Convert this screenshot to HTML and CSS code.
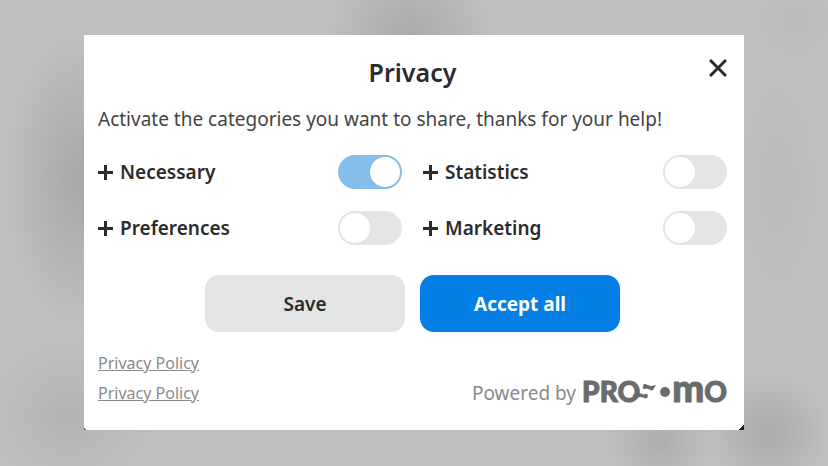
FILE: index.html
```html
<!DOCTYPE html>
<html lang="en">
<head>
  <meta charset="UTF-8">
  <meta name="viewport" content="width=device-width, initial-scale=1">
  <title>Privacy</title>
  <link rel="stylesheet" href="styles.css">
</head>
<body>
  <div class="dialog" role="dialog" aria-labelledby="title">
    <div class="header">
      <h1 id="title" class="title">Privacy</h1>
      <button class="close" aria-label="Close">
        <svg width="18" height="18" viewBox="0 0 18 18"><path d="M1 1l16 16M17 1L1 17"/></svg>
      </button>
    </div>

    <p class="intro">Activate the categories you want to share, thanks for your help!</p>

    <form class="categories">
      <div class="category">
        <button type="button" class="expand" aria-label="More about Necessary">
          <svg width="15" height="15" viewBox="0 0 15 15"><path d="M7.500 0v15M0 7.500h15"/></svg>
        </button>
        <label for="necessary">Necessary</label>
        <input type="checkbox" id="necessary" class="toggle" checked>
      </div>
      <div class="category">
        <button type="button" class="expand" aria-label="More about Statistics">
          <svg width="15" height="15" viewBox="0 0 15 15"><path d="M7.500 0v15M0 7.500h15"/></svg>
        </button>
        <label for="statistics">Statistics</label>
        <input type="checkbox" id="statistics" class="toggle">
      </div>
      <div class="category">
        <button type="button" class="expand" aria-label="More about Preferences">
          <svg width="15" height="15" viewBox="0 0 15 15"><path d="M7.500 0v15M0 7.500h15"/></svg>
        </button>
        <label for="preferences">Preferences</label>
        <input type="checkbox" id="preferences" class="toggle">
      </div>
      <div class="category">
        <button type="button" class="expand" aria-label="More about Marketing">
          <svg width="15" height="15" viewBox="0 0 15 15"><path d="M7.500 0v15M0 7.500h15"/></svg>
        </button>
        <label for="marketing">Marketing</label>
        <input type="checkbox" id="marketing" class="toggle">
      </div>
    </form>

    <div class="actions">
      <button class="btn">Save</button>
      <button class="btn accept">Accept all</button>
    </div>

    <div class="footer">
      <div class="links">
        <a href="#">Privacy Policy</a>
        <a href="#">Privacy Policy</a>
      </div>
      <div class="powered">
        <span>Powered by</span>
        <span class="logo">
          <span>PRO</span>
          <svg class="mark" width="32" height="20" viewBox="0 0 32 20">
            <path d="M-7 12.500L-1 11l5 1.500q2-1.500 4 .5-1 .8 0 2-2 2.500-4.500.5L-1 15l-5 2zM3 3q2-2 4.500 0l3.500 1 5-1-3 5q-2 1-3.500-.5L6 6.500Q4 8 2.500 6 4 4.500 3 3z"/>
            <circle cx="25" cy="10" r="5"/>
          </svg>
          <span class="big">m</span>
          <span>O</span>
        </span>
      </div>
    </div>
  </div>
</body>
</html>
```
FILE: styles.css
```css
* {
  box-sizing: border-box;
}
body {
  margin: 0;
  min-height: 100vh;
  padding: 35px 84px;
  font-family: 'Noto Sans', 'Open Sans', sans-serif;
  font-size: 19px;
  color: #2b2b2b;
  background:
    radial-gradient(circle at 410px 38px, #a8aaaa 0, #a8aaaa00 85px),
    radial-gradient(ellipse 75px 150px at 78px 180px, #a6a8a8 0, #a6a8a800 100%),
    radial-gradient(ellipse 90px 80px at 70px 415px, #b2b4b4 0, #b2b4b400 100%),
    radial-gradient(ellipse 45px 120px at 778px 185px, #b8b9b9 0, #b8b9b900 100%),
    radial-gradient(circle at 796px 20px, #b9baba 0, #b9baba00 45px),
    radial-gradient(circle at 768px 433px, #a9aaaa 0, #a9aaaa00 62px),
    radial-gradient(circle at 660px 440px, #acaeae 0, #acaeae00 55px),
    #bfbfbf;
}
button {
  font: inherit;
  color: inherit;
  border: none;
  cursor: pointer;
}
svg {
  display: block;
}
.dialog {
  /* tiny blue and dark corners at the bottom */
  background:
    linear-gradient(45deg, #2277b5 2px, #fff0 2px),
    linear-gradient(135deg, #fff calc(100% - 4px), #222 calc(100% - 4px));
  padding: 20px 17px 22px 14px;
}
.header {
  display: grid;
  grid-template-columns: 1fr auto 1fr;
}
.title {
  grid-column: 2;
  margin: 0;
  font-size: 25px;
  line-height: 34px;
  font-weight: 600;
}
.close {
  justify-self: end;
  align-self: start;
  padding: 4px 0;
  background: none;
}
.close path,
.expand path {
  fill: none;
  stroke: #2b2b2b;
  stroke-width: 3;
}
.intro {
  margin: 16px 0 22px;
  line-height: 28px;
  color: #444;
}
.categories {
  display: grid;
  grid-template-columns: 1fr 1fr;
  gap: 22px 21px;
}
.category {
  display: flex;
  align-items: center;
  gap: 7px;
  font-weight: 600;
}
.category label {
  flex: 1;
  line-height: 34px;
}
.expand {
  padding: 0;
  background: none;
}
.toggle {
  appearance: none;
  margin: 0;
  padding: 2px;
  width: 64px;
  height: 34px;
  border-radius: 17px;
  background: #e3e5e4;
  display: flex;
  cursor: pointer;
}
.toggle::before {
  content: '';
  width: 30px;
  height: 30px;
  border-radius: 50%;
  background: #fff;
}
.toggle:checked {
  background: #86bee9;
  justify-content: flex-end;
}
.actions {
  display: flex;
  justify-content: center;
  gap: 15px;
  margin: 30px 0 16px;
}
.btn {
  width: 200px;
  height: 57px;
  border-radius: 14px;
  background: #e3e5e4;
  font-weight: 600;
}
.accept {
  background: #037fe6;
  color: #fff;
  font-weight: 700;
}
.footer {
  display: flex;
  justify-content: space-between;
  align-items: flex-end;
  line-height: 30px;
  color: #8a8a8a;
}
.links {
  display: flex;
  flex-direction: column;
  font-size: 16px;
}
.links a {
  color: #8a8a8a;
}
.powered {
  display: flex;
  align-items: center;
  gap: 6px;
}
.logo {
  display: flex;
  align-items: baseline;
  height: 30px;
  font-family: Lato, sans-serif;
  font-size: 28px;
  line-height: 18px;
  font-weight: 900;
  color: #6b6b6b;
  -webkit-text-stroke: 1px #6b6b6b;
}
.big {
  font-size: 38px;
}
.mark {
  overflow: visible;
  fill: #6b6b6b;
}
```
